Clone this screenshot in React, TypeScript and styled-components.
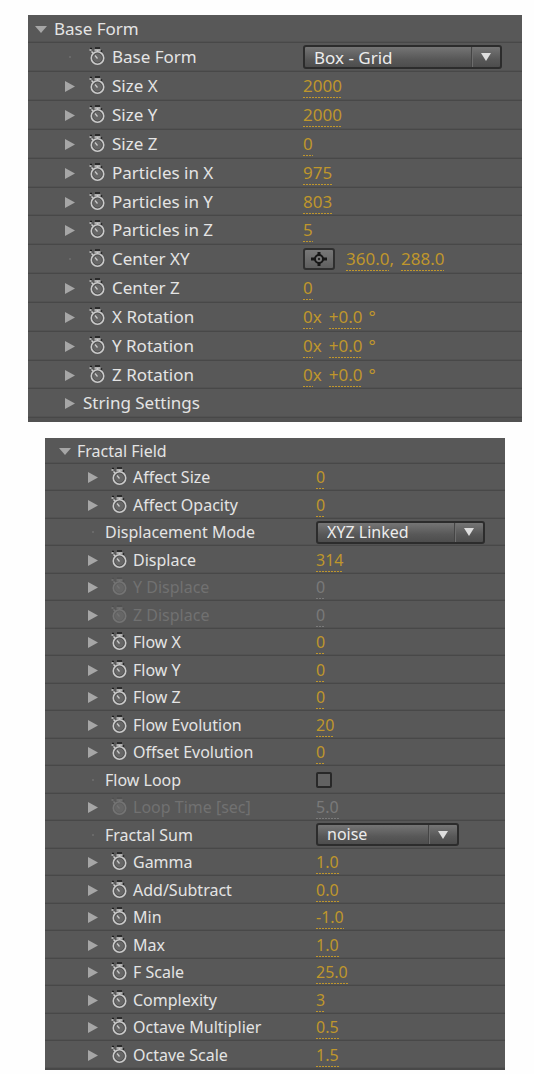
import React, { useState } from "react";
import styled, { createGlobalStyle, css } from "styled-components";

const GlobalStyle = createGlobalStyle`
  * { box-sizing: border-box; }
  body { margin: 0; background: #fefefe; }
  button, select, input { font: inherit; color: inherit; margin: 0; }
`;

const Page = styled.main`
  display: flex;
  flex-direction: column;
  gap: 16px;
  padding: 15px 12px 4px 28px;
  font-family: "Noto Sans", "Open Sans", sans-serif;
  color: #e4e4e4;
`;

const roomyRows = css`
  font-size: 17px;
  --label-column: 275px;
  --header-indent: 7px;
  --row-indent: 36px;
  --gap: 7px;
  --row: 29px;
  --row-alt: 29px;
  --first-row: 28px;
  --control: 24px;
  border-bottom: 4px solid #525252;
  & > :nth-child(6n + 1) { height: 28px; }
`;

const compactRows = css`
  font-size: 16px;
  --label-column: 271px;
  --header-indent: 14px;
  --row-indent: 42px;
  --gap: 6px;
  --row: 28px;
  --row-alt: 27px;
  --first-row: 26px;
  --control: 23px;
  margin: 0 17px;
  border-bottom: 1px solid #484848;
`;

const Panel = styled.section<{ $compact?: boolean }>`
  background: #585858;
  & > * { height: var(--row); }
  & > :nth-child(even) { height: var(--row-alt); }
  ${(p) => (p.$compact ? compactRows : roomyRows)}
  & > :first-child { height: var(--first-row); }
`;

const Row = styled.div<{ $disabled?: boolean }>`
  display: grid;
  grid-template-columns: var(--label-column) 1fr;
  align-items: center;
  border-bottom: 1px solid #484848;
  box-shadow: inset 0 -1px #525252;
  line-height: 24px;
  white-space: nowrap;
  color: ${(p) => (p.$disabled ? "#717171" : "inherit")};
`;

const LabelCell = styled.div<{ $header?: boolean }>`
  display: flex;
  align-items: center;
  gap: var(--gap);
  padding-left: ${(p) => (p.$header ? "var(--header-indent)" : "var(--row-indent)")};
`;

const Heading = styled.h2`
  margin: 0;
  font-size: inherit;
  font-weight: 400;
`;

const IconButton = styled.button`
  display: flex;
  flex: none;
  align-items: center;
  justify-content: center;
  width: 12px;
  height: 24px;
  padding: 0;
  border: 0;
  background: none;
`;

const StopwatchButton = styled(IconButton)`
  width: 16px;
  margin-left: 6px;
`;

const LabelGroup = styled.div`
  display: flex;
  align-items: center;
  gap: var(--gap);
`;

const Dot = styled.span`
  width: 12px;
  display: flex;
  justify-content: center;
  &::before {
    content: "";
    width: 2px;
    height: 2px;
    background: #696969;
  }
`;

const ValueCell = styled.div<{ $disabled?: boolean }>`
  display: flex;
  align-items: center;
  color: ${(p) => (p.$disabled ? "#7a7a7a" : "#bf962c")};
`;

const HotValue = styled.button`
  padding: 0;
  border: 0;
  height: 24px;
  line-height: 24px;
  background: repeating-linear-gradient(90deg, currentColor 0 2px, transparent 2px 3px)
    left bottom / 100% 1px no-repeat;
`;

const Unit = styled.span`
  margin-right: 7px;
`;

const Degree = styled.span`
  margin-left: 6px;
`;

const SelectBox = styled.div<{ $width: number }>`
  display: grid;
  grid-template-columns: 1fr 29px;
  align-items: center;
  width: ${(p) => p.$width}px;
  max-width: 100%;
  height: var(--control);
  border: 2px solid #2c2c2c;
  border-radius: 3px;
  background: linear-gradient(#757575, #585858 60%, #4d4d4d);
  color: #ececec;
`;

const NativeSelect = styled.select`
  grid-row: 1;
  grid-column: 1 / -1;
  appearance: none;
  height: 100%;
  padding: 0 29px 0 9px;
  border: 0;
  background: none;
  line-height: 19px;
`;

const SelectArrow = styled.span`
  grid-row: 1;
  grid-column: 2;
  display: flex;
  align-items: center;
  justify-content: center;
  height: 100%;
  border-left: 1px solid #454545;
  box-shadow: inset 1px 0 #6d6d6d;
  pointer-events: none;
`;

const PointButton = styled.button`
  display: flex;
  align-items: center;
  justify-content: center;
  width: 32px;
  height: 22px;
  margin-right: 11px;
  padding: 0;
  border: 2px solid #2f2f2f;
  border-radius: 3px;
  background: linear-gradient(#787878, #606060);
`;

const CheckBox = styled.input`
  appearance: none;
  width: 16px;
  height: 16px;
  border: 2px solid #282828;
  border-radius: 2px;
  background: #626262;
  &:checked { background: #c4c4c4; }
`;

const Twirl = ({ open }: { open?: boolean }) => (
  <svg width="12" height="12" viewBox="0 0 12 12" aria-hidden="true">
    <path d={open ? "M0 3H12L6 10Z" : "M1 1L11 6.500L1 12Z"} fill="#a6a6a6" />
  </svg>
);

const Stopwatch = ({ dim }: { dim?: boolean }) => {
  const line = dim ? "#747474" : "#cbcbcb";
  const dark = dim ? "#505050" : "#1d1d1d";
  return (
    <svg width="16" height="24" viewBox="0 0 16 24" aria-hidden="true">
      <path d="M6 3H11M1 3.500H3M12 5.500L13 6.500" stroke={dark} strokeWidth="1.600" fill="none" />
      <path d="M5.500 5H11.500M8.500 5V7M0.500 5H2.500M2.500 6.500L4 8" stroke={line} strokeWidth="1.500" fill="none" />
      <circle cx="8.500" cy="13" r="6.200" fill="#666" stroke={line} strokeWidth="1.600" />
      <circle cx="8.500" cy="13" r="4.900" fill="none" stroke={dark} strokeWidth="0.600" opacity="0.500" />
      <path d="M6 10.500L8.500 13.500" stroke={line} strokeWidth="1.200" />
    </svg>
  );
};

const Crosshair = () => (
  <svg width="18" height="16" viewBox="0 0 18 16" aria-hidden="true">
    <path d="M9 1V5M9 11V15M1 8H5M13 8H17" stroke="#161616" strokeWidth="3" />
    <circle cx="9" cy="8" r="4" fill="#777" stroke="#161616" strokeWidth="2" />
    <circle cx="9" cy="8" r="1.200" fill="#222" />
  </svg>
);

type Item = {
  label: string;
  parts?: string[];
  options?: string[];
  width?: number;
  check?: boolean;
  point?: boolean;
  leaf?: boolean;
  plain?: boolean;
  disabled?: boolean;
};

/* Parts that start with a digit or sign are editable; the rest are units. */
const isEditable = (part: string) => /^[-+\d]/.test(part);

const PropertyRow = ({ item }: { item: Item }) => {
  const [watched, setWatched] = useState(false);
  const [open, setOpen] = useState(false);
  const id = item.label.toLowerCase().replace(/[^a-z]+/g, "-") + (item.options ? "-menu" : "");
  return (
    <Row $disabled={item.disabled}>
      <LabelCell>
        {item.leaf ? (
          <Dot />
        ) : (
          <IconButton
            type="button"
            aria-label={`Expand ${item.label}`}
            aria-expanded={open}
            onClick={() => setOpen(!open)}
          >
            <Twirl open={open} />
          </IconButton>
        )}
        {/* The stopwatch sits one step further in than a bare label. */}
        <LabelGroup>
          {!item.plain && (
            <StopwatchButton
              type="button"
              disabled={item.disabled}
              aria-label={`Animate ${item.label}`}
              aria-pressed={watched}
              onClick={() => setWatched(!watched)}
            >
              <Stopwatch dim={item.disabled} />
            </StopwatchButton>
          )}
          {item.options || item.check ? (
            <label htmlFor={id}>{item.label}</label>
          ) : (
            <span id={id}>{item.label}</span>
          )}
        </LabelGroup>
      </LabelCell>
      <ValueCell $disabled={item.disabled}>
        {item.options && (
          <SelectBox $width={item.width ?? 169}>
            <NativeSelect id={id}>
              {item.options.map((o) => (
                <option key={o}>{o}</option>
              ))}
            </NativeSelect>
            <SelectArrow>
              <svg width="12" height="8" viewBox="0 0 12 8" aria-hidden="true">
                <path d="M1 0H11L6 8Z" fill="#dedede" />
              </svg>
            </SelectArrow>
          </SelectBox>
        )}
        {item.check && <CheckBox id={id} type="checkbox" />}
        {item.point && (
          <PointButton type="button" aria-label="Pick a point">
            <Crosshair />
          </PointButton>
        )}
        {item.parts?.map((part, i) => {
          if (isEditable(part)) {
            return (
              <HotValue key={i} type="button" disabled={item.disabled} aria-describedby={id}>
                {part}
              </HotValue>
            );
          }
          return part === "°" ? <Degree key={i}>{part}</Degree> : <Unit key={i}>{part}</Unit>;
        })}
      </ValueCell>
    </Row>
  );
};

const PropertyGroup = ({ title, items, compact }: { title: string; items: Item[]; compact?: boolean }) => (
  <Panel $compact={compact}>
    <Row>
      <LabelCell $header>
        <IconButton type="button" aria-label={`Collapse ${title}`} aria-expanded>
          <Twirl open />
        </IconButton>
        <Heading>{title}</Heading>
      </LabelCell>
    </Row>
    {items.map((item) => (
      <PropertyRow key={item.label} item={item} />
    ))}
  </Panel>
);

const baseForm: Item[] = [
  { label: "Base Form", options: ["Box - Grid"], width: 199, leaf: true },
  { label: "Size X", parts: ["2000"] },
  { label: "Size Y", parts: ["2000"] },
  { label: "Size Z", parts: ["0"] },
  { label: "Particles in X", parts: ["975"] },
  { label: "Particles in Y", parts: ["803"] },
  { label: "Particles in Z", parts: ["5"] },
  { label: "Center XY", point: true, parts: ["360.0", ",", "288.0"], leaf: true },
  { label: "Center Z", parts: ["0"] },
  { label: "X Rotation", parts: ["0", "x", "+0.0", "°"] },
  { label: "Y Rotation", parts: ["0", "x", "+0.0", "°"] },
  { label: "Z Rotation", parts: ["0", "x", "+0.0", "°"] },
  { label: "String Settings", plain: true },
];

const fractalField: Item[] = [
  { label: "Affect Size", parts: ["0"] },
  { label: "Affect Opacity", parts: ["0"] },
  { label: "Displacement Mode", options: ["XYZ Linked"], width: 169, leaf: true, plain: true },
  { label: "Displace", parts: ["314"] },
  { label: "Y Displace", parts: ["0"], disabled: true },
  { label: "Z Displace", parts: ["0"], disabled: true },
  { label: "Flow X", parts: ["0"] },
  { label: "Flow Y", parts: ["0"] },
  { label: "Flow Z", parts: ["0"] },
  { label: "Flow Evolution", parts: ["20"] },
  { label: "Offset Evolution", parts: ["0"] },
  { label: "Flow Loop", check: true, leaf: true, plain: true },
  { label: "Loop Time [sec]", parts: ["5.0"], disabled: true },
  { label: "Fractal Sum", options: ["noise"], width: 143, leaf: true, plain: true },
  { label: "Gamma", parts: ["1.0"] },
  { label: "Add/Subtract", parts: ["0.0"] },
  { label: "Min", parts: ["-1.0"] },
  { label: "Max", parts: ["1.0"] },
  { label: "F Scale", parts: ["25.0"] },
  { label: "Complexity", parts: ["3"] },
  { label: "Octave Multiplier", parts: ["0.5"] },
  { label: "Octave Scale", parts: ["1.5"] },
];

export default function App() {
  return (
    <>
      <GlobalStyle />
      <Page>
        <PropertyGroup title="Base Form" items={baseForm} />
        <PropertyGroup title="Fractal Field" items={fractalField} compact />
      </Page>
    </>
  );
}
